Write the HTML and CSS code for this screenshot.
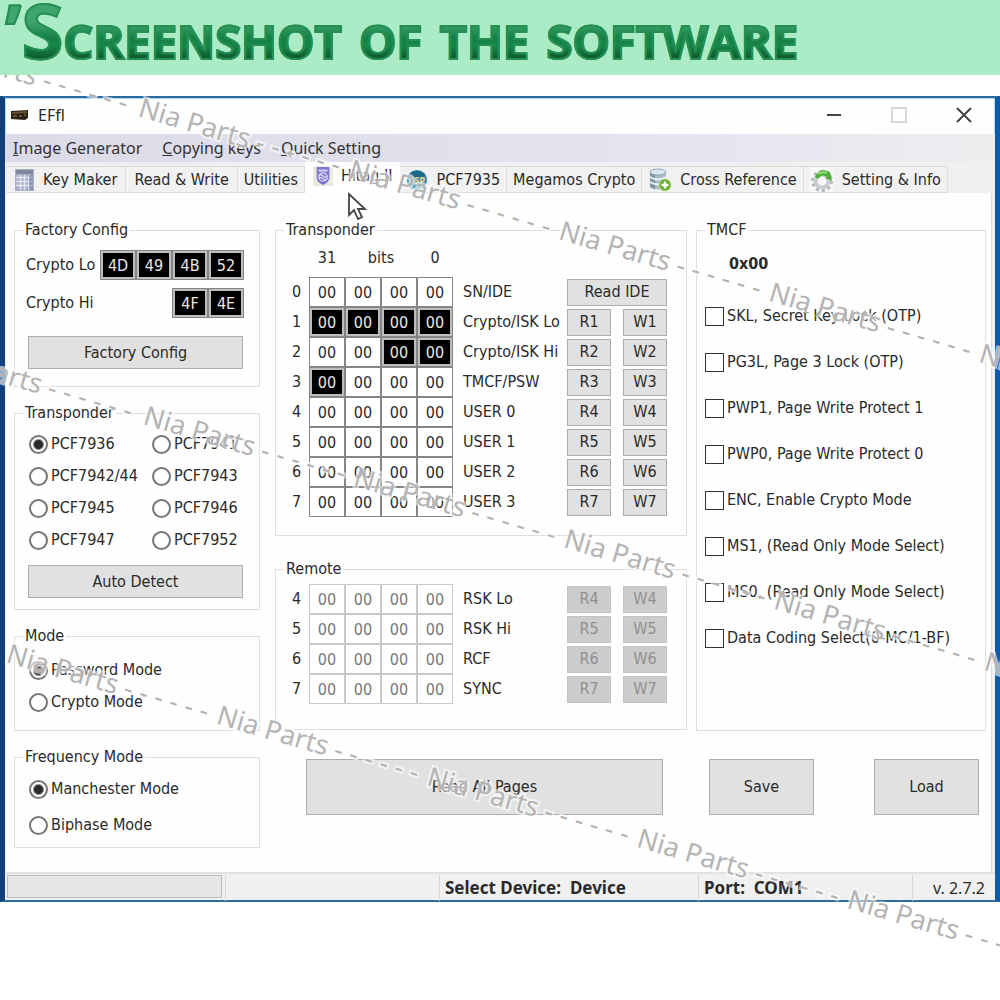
FILE: index.html
```html
<!DOCTYPE html>
<html lang="en">
<head>
    <meta charset="UTF-8">
    <meta name="viewport" content="width=device-width, initial-scale=1.0">
    <title>EFfl</title>
    <link rel="stylesheet" href="styles.css">
</head>
<body>

    <h1 class="banner"><span class="banner-text"><span class="banner-initial">’S</span>creenshot of the software</span></h1>

    <div class="window">
        <div class="titlebar">
            <svg class="app-icon" width="18" height="12" viewBox="0 0 18 12">
                <path d="M0 2 L17 1 V9 L14 11 L0 10 Z" fill="#2b2015"/>
                <path d="M1 3 L16 2 V4 L1 5 Z" fill="#6b5230"/>
                <path d="M2 7h4M8 7h3M13 6h2" stroke="#a58550" stroke-width="1"/>
            </svg>
            <span class="title">EFfl</span>
            <div class="window-buttons">
                <button aria-label="Minimize"><svg width="16" height="16"><path d="M1 8H15" stroke="#444" stroke-width="2"/></svg></button>
                <button aria-label="Maximize" disabled><svg width="16" height="16"><rect x="1" y="1" width="14" height="14" fill="none" stroke="#d8d8d8" stroke-width="2"/></svg></button>
                <button aria-label="Close"><svg width="16" height="16"><path d="M1 1L15 15M15 1L1 15" stroke="#444" stroke-width="2"/></svg></button>
            </div>
        </div>

        <nav class="menu">
            <a href="#"><u>I</u>mage Generator</a>
            <a href="#"><u>C</u>opying keys</a>
            <a href="#"><u>Q</u>uick Setting</a>
        </nav>

        <div class="tabs" role="tablist">
            <button role="tab" class="tab">
                <svg width="20" height="24" viewBox="0 0 20 24">
                    <rect x="0" y="1" width="19" height="22" fill="#a9afc4"/>
                    <rect x="1" y="2" width="17" height="4" fill="#7f879f"/>
                    <path d="M1 9.500H18M1 13.500H18M1 17.500H18M5.500 7V22M9.500 7V22M14 7V22" stroke="#e3e6f2" stroke-width="1.500"/>
                    <path d="M14 7h4v15h-4z" fill="#7078a0" opacity=".5"/>
                </svg>
                Key Maker
            </button>
            <button role="tab" class="tab tab-text">Read &amp; Write</button>
            <button role="tab" class="tab">Utilities</button>
            <button role="tab" class="tab active" aria-selected="true">
                <svg width="20" height="22" viewBox="0 0 22 22">
                    <rect width="22" height="22" fill="#ebe9df"/>
                    <path d="M4 1H18V13Q18 18 11 21Q4 18 4 13Z" fill="#7d76cf"/>
                    <path d="M6 4H16V6H6Z" fill="#dcd9f5"/>
                    <circle cx="11" cy="12" r="4.500" fill="none" stroke="#dcd9f5" stroke-width="1.300"/>
                    <path d="M6 11q2.500-2.500 5 0t5 0M6 14q2.500-2.500 5 0t5 0" fill="none" stroke="#dcd9f5" stroke-width="1.200"/>
                </svg>
                Hitag II
            </button>
            <button role="tab" class="tab">
                <svg width="22" height="24" viewBox="0 0 24 24">
                    <circle cx="12" cy="12" r="11" fill="#2f8ba6"/>
                    <path d="M3 6Q12 -2 21 6L19 9H5Z" fill="#1c6a86"/>
                    <text x="12" y="16" class="chip-text">ESP</text>
                    <path d="M5 19Q12 24 19 19" fill="none" stroke="#7cc3d4" stroke-width="1.500"/>
                </svg>
                PCF7935
            </button>
            <button role="tab" class="tab">Megamos Crypto</button>
            <button role="tab" class="tab">
                <svg width="24" height="24" viewBox="0 0 24 24">
                    <path d="M2 4v15q8 5 16 0V4z" fill="#a9bcc8"/>
                    <path d="M2 4v15q3 2 5 2.300V5z" fill="#7e95a5"/>
                    <ellipse cx="10" cy="4" rx="8" ry="3" fill="#dbe7ee" stroke="#91a5b1"/>
                    <path d="M2 9q8 5 16 0M2 14q8 5 16 0" fill="none" stroke="#edf4f8" stroke-width="2"/>
                    <circle cx="17" cy="17" r="6" fill="#67ad2c" stroke="#b9dc92"/>
                    <path d="M17 13.500V20.500M13.500 17H20.500" stroke="#fff" stroke-width="2.500"/>
                </svg>
                Cross Reference
            </button>
            <button role="tab" class="tab">
                <svg width="24" height="24" viewBox="0 0 24 24">
                    <rect width="24" height="24" fill="#f8f8f8"/>
                    <circle cx="12" cy="13" r="9" fill="none" stroke="#b4b9bc" stroke-width="4" stroke-dasharray="3 2.650"/>
                    <circle cx="12" cy="13" r="6.500" fill="none" stroke="#c9cdd0" stroke-width="4"/>
                    <path d="M5 9Q8 2 14 2L20 4L22 13L15 10L17 9Q12 5 8 11Z" fill="#4caf37"/>
                    <path d="M8 6Q12 3 17 5" fill="none" stroke="#9bdc83" stroke-width="2"/>
                </svg>
                Setting &amp; Info
            </button>
            <svg class="pointer" width="22" height="30" viewBox="0 0 22 30">
                <path d="M2 2V23L7 18L11 27L15 25L11 17H18Z" fill="#fff" stroke="#444" stroke-width="1.800"/>
            </svg>
        </div>

        <div class="panel">
            <div class="column column-left">
                <fieldset class="factory">
                    <legend>Factory Config</legend>
                    <div class="key-row">
                        <span>Crypto Lo</span>
                        <div class="bytes">
                            <input class="byte dark" value="4D" aria-label="Crypto Lo 3"><input class="byte dark" value="49" aria-label="Crypto Lo 2"><input class="byte dark" value="4B" aria-label="Crypto Lo 1"><input class="byte dark" value="52" aria-label="Crypto Lo 0">
                        </div>
                    </div>
                    <div class="key-row">
                        <span>Crypto Hi</span>
                        <div class="bytes">
                            <input class="byte dark" value="4F" aria-label="Crypto Hi 1"><input class="byte dark" value="4E" aria-label="Crypto Hi 0">
                        </div>
                    </div>
                    <button class="btn wide">Factory Config</button>
                </fieldset>

                <fieldset class="chips">
                    <legend>Transponder</legend>
                    <div class="chip-grid">
                        <label class="option"><input type="radio" name="chip" checked>PCF7936</label>
                        <label class="option"><input type="radio" name="chip">PCF7941</label>
                        <label class="option"><input type="radio" name="chip">PCF7942/44</label>
                        <label class="option"><input type="radio" name="chip">PCF7943</label>
                        <label class="option"><input type="radio" name="chip">PCF7945</label>
                        <label class="option"><input type="radio" name="chip">PCF7946</label>
                        <label class="option"><input type="radio" name="chip">PCF7947</label>
                        <label class="option"><input type="radio" name="chip">PCF7952</label>
                    </div>
                    <button class="btn wide">Auto Detect</button>
                </fieldset>

                <fieldset class="mode">
                    <legend>Mode</legend>
                    <label class="option"><input type="radio" name="mode" checked>Password Mode</label>
                    <label class="option"><input type="radio" name="mode">Crypto Mode</label>
                </fieldset>

                <fieldset class="frequency">
                    <legend>Frequency Mode</legend>
                    <label class="option"><input type="radio" name="frequency" checked>Manchester Mode</label>
                    <label class="option"><input type="radio" name="frequency">Biphase Mode</label>
                </fieldset>
            </div>

            <div class="column column-middle">
                <fieldset class="pages">
                    <legend>Transponder</legend>
                    <table>
                        <thead>
                            <tr>
                                <th class="col-index"></th>
                                <th class="col-byte">31</th>
                                <th class="col-bits" colspan="2">bits</th>
                                <th class="col-byte">0</th>
                                <th></th>
                                <th class="col-buttons"></th>
                            </tr>
                        </thead>
                        <tbody id="transponderPages"></tbody>
                    </table>
                </fieldset>

                <fieldset class="remote">
                    <legend>Remote</legend>
                    <table>
                        <tbody id="remotePages"></tbody>
                    </table>
                </fieldset>

                <button class="btn big read-all">Read All Pages</button>
            </div>

            <div class="column column-right">
                <fieldset class="tmcf">
                    <legend>TMCF</legend>
                    <strong class="value">0x00</strong>
                    <label class="option"><input type="checkbox">SKL, Secret Key Lock (OTP)</label>
                    <label class="option"><input type="checkbox">PG3L, Page 3 Lock (OTP)</label>
                    <label class="option"><input type="checkbox">PWP1, Page Write Protect 1</label>
                    <label class="option"><input type="checkbox">PWP0, Page Write Protect 0</label>
                    <label class="option"><input type="checkbox">ENC, Enable Crypto Mode</label>
                    <label class="option"><input type="checkbox">MS1, (Read Only Mode Select)</label>
                    <label class="option"><input type="checkbox">MS0, (Read Only Mode Select)</label>
                    <label class="option"><input type="checkbox">Data Coding Select(0-MC/1-BF)</label>
                </fieldset>
                <div class="file-buttons">
                    <button class="btn big">Save</button>
                    <button class="btn big">Load</button>
                </div>
            </div>
        </div>

        <div class="status">
            <div class="status-progress"><progress value="0" max="100" aria-label="Progress"></progress></div>
            <div class="status-empty"></div>
            <div class="status-device">Select Device:&nbsp; Device</div>
            <div class="status-port">Port:&nbsp; COM1</div>
            <div class="status-version">v. 2.7.2</div>
        </div>
    </div>

    <svg class="watermark" width="1000" height="1000">
        <defs>
            <text id="mark">Nia Parts - - - - - -</text>
        </defs>
        <g transform="translate(137 116) rotate(16.300)">
            <use href="#mark" x="-222"/><use href="#mark"/><use href="#mark" x="219"/><use href="#mark" x="438"/><use href="#mark" x="657"/><use href="#mark" x="876"/>
        </g>
        <g transform="translate(142 424) rotate(16.300)">
            <use href="#mark" x="-222"/><use href="#mark"/><use href="#mark" x="219"/><use href="#mark" x="438"/><use href="#mark" x="657"/><use href="#mark" x="876"/>
        </g>
        <g transform="translate(5 662) rotate(16.300)">
            <use href="#mark"/><use href="#mark" x="219"/><use href="#mark" x="438"/><use href="#mark" x="657"/><use href="#mark" x="876"/>
        </g>
    </svg>

    <script>
        // "dark" lists the byte columns that hold key data
        const transponderPages = [
            { page: 0, name: "SN/IDE", dark: [] },
            { page: 1, name: "Crypto/ISK Lo", dark: [0, 1, 2, 3] },
            { page: 2, name: "Crypto/ISK Hi", dark: [2, 3] },
            { page: 3, name: "TMCF/PSW", dark: [0] },
            { page: 4, name: "USER 0", dark: [] },
            { page: 5, name: "USER 1", dark: [] },
            { page: 6, name: "USER 2", dark: [] },
            { page: 7, name: "USER 3", dark: [] }
        ];

        const remotePages = [
            { page: 4, name: "RSK Lo", dark: [] },
            { page: 5, name: "RSK Hi", dark: [] },
            { page: 6, name: "RCF", dark: [] },
            { page: 7, name: "SYNC", dark: [] }
        ];

        function fillPages(id, pages, disabled) {
            var off = disabled ? " disabled" : "";
            var html = "";
            pages.forEach(function(row) {
                html += '<tr><td class="col-index">' + row.page + '</td>';
                for (var i = 0; i < 4; i++) {
                    html += '<td class="col-byte"><input class="byte' + (row.dark.includes(i) ? " dark" : "") +
                            '" value="00" aria-label="' + row.name + " byte " + (3 - i) + '"' + off + '></td>';
                }
                html += '<td class="col-name">' + row.name + '</td><td class="col-buttons"><div class="page-buttons">';
                if (row.page === 0) {
                    html += '<button class="btn">Read IDE</button>';
                } else {
                    html += '<button class="btn"' + off + '>R' + row.page + '</button>' +
                            '<button class="btn"' + off + '>W' + row.page + '</button>';
                }
                html += '</div></td></tr>';
            });
            document.getElementById(id).innerHTML = html;
        }

        fillPages("transponderPages", transponderPages, false);
        fillPages("remotePages", remotePages, true);
    </script>

</body>
</html>
```

FILE: styles.css
```css
* {
    box-sizing: border-box;
}

body {
    position: relative;
    min-height: 100vh;
    margin: 0;
    background-color: #fff;
    color: #2a2a2a;
    font-family: "DejaVu Sans Condensed", "DejaVu Sans", sans-serif;
    font-size: 16px;
    line-height: 18px;
    overflow-x: hidden;
}

button, input {
    font: inherit;
    color: inherit;
}

.banner {
    position: relative;
    z-index: 2;
    margin: 0 0 21px;
    height: 75px;
    background-color: #abebc6;
    font-family: "Open Sans", sans-serif;
    font-size: 67px;
    font-weight: bold;
    font-variant: small-caps;
    line-height: 60px;
    white-space: nowrap;
}

.banner-text {
    display: inline-block;
    height: 75px;
    padding-left: 5px;
    background: linear-gradient(#3fa56f 22px, #158045 38px, #17864a 46px, #0c5227 60px);
    background-clip: text;
    -webkit-background-clip: text;
    color: transparent;
    -webkit-text-stroke: 2px #258f52;
}

.banner-initial {
    font-size: 76px;
}

/* window frame */
.window {
    border-style: solid;
    border-width: 2px 5px;
    border-color: #2c6aa0 #1259a8 #2c6aa0 #12407a;
    background-color: #f0f0f0;
}

.titlebar {
    display: flex;
    align-items: center;
    height: 36px;
    padding: 0 22px 3px 5px;
    border: 1px solid #a9dcf7;
    border-bottom: none;
    background-color: #fefefe;
}

.title {
    margin-left: 9px;
    font-family: "Noto Sans", sans-serif;
    font-size: 16px;
}

.window-buttons {
    display: flex;
    gap: 49px;
    margin-left: auto;
}

.window-buttons button {
    display: flex;
    padding: 0;
    border: none;
    background: none;
}

.menu {
    display: flex;
    gap: 20px;
    height: 28px;
    padding: 0 8px;
    background: linear-gradient(to right, #dcdbe8, #e4e5f0 70%, #eeeef0);
    font-family: "Noto Sans", sans-serif;
    font-size: 16px;
    line-height: 28px;
}

.menu a {
    color: #333;
    text-decoration: none;
}

.tabs {
    position: relative;
    display: flex;
    align-items: flex-end;
    height: 31px;
    padding: 0 2px;
}

.tab {
    display: flex;
    align-items: center;
    gap: 8px;
    height: 27px;
    padding: 0 6px;
    border: 1px solid #dcdcdc;
    border-left: none;
    background-color: #f1f1f1;
    white-space: nowrap;
}

.tab:first-child, .tab-text {
    padding: 0 8px;
}

.tab.active {
    height: 31px;
    padding: 0 8px 3px;
    border: none;
    background-color: #fff;
}

.chip-text {
    font-size: 9px;
    font-weight: bold;
    text-anchor: middle;
    fill: #e5d38c;
}

.pointer {
    position: absolute;
    left: 342px;
    top: 30px;
}

/* main panel */
.panel {
    display: grid;
    grid-template-columns: 252fr 412fr 290fr;
    column-gap: 9px;
    margin: 0 3px 0 1px;
    padding: 28px 5px 24px 8px;
    background-color: #fefefe;
    border-right: 1px solid #dcdcdc;
}

.column {
    display: flex;
    flex-direction: column;
    min-width: 0;
}

.column-left {
    gap: 17px;
    padding-right: 6px;
}

.column-middle {
    gap: 24px;
}

fieldset {
    min-width: 0;
    margin: 0;
    padding: 0 0 0 8px;
    border: 1px solid #dedede;
}

legend {
    padding: 0 2px;
    line-height: 18px;
}

.btn {
    padding: 0;
    border: 1px solid #adadad;
    background-color: #e1e1e1;
}

.btn:disabled {
    border-color: #c4c4c4;
    background-color: #cccccc;
    color: #909090;
}

.btn.wide {
    display: block;
    width: 215px;
    max-width: 100%;
    height: 33px;
    margin-left: 5px;
}

.btn.big {
    height: 56px;
}

.byte {
    display: block;
    width: 36px;
    height: 30px;
    padding: 0;
    border: 1px solid #858585;
    border-radius: 0;
    background-color: #fff;
    text-align: center;
}

.byte.dark {
    background-color: #000;
    color: #e8e8e8;
    box-shadow: inset 0 0 0 2px #bdbdbd;
}

.byte:disabled {
    border-color: #c8c8c8;
    color: #777;
}

.option {
    display: flex;
    align-items: center;
    gap: 3px;
    height: 32px;
    white-space: nowrap;
}

.option input {
    appearance: none;
    flex: none;
    width: 19px;
    height: 19px;
    margin: 0;
    border: 1px solid #333;
    background-color: #fff;
}

.option input[type="radio"] {
    border: 2px solid #777;
    border-radius: 50%;
}

.option input[type="radio"]:checked {
    background: radial-gradient(circle, #2a2a2a 4px, #fff 6px);
}

.factory {
    padding: 11px 15px 17px 8px;
}

.key-row {
    display: flex;
    align-items: center;
    justify-content: space-between;
    margin: 0 0 8px 3px;
}

.bytes {
    display: flex;
}

.factory .btn {
    margin-top: 18px;
}

.chips {
    padding: 6px 11px 11px 8px;
}

.chip-grid {
    display: grid;
    grid-template-columns: 123px 1fr;
    margin: 0 0 9px 6px;
}

.mode {
    padding: 9px 0 12px 8px;
}

.frequency {
    padding: 7px 0 6px 8px;
}

.mode .option, .frequency .option {
    margin-left: 6px;
}

.frequency .option + .option {
    margin-top: 4px;
}

/* page tables */
table {
    width: 100%;
    border-collapse: collapse;
}

th {
    height: 38px;
    font-weight: normal;
}

th, td {
    padding: 0;
}

td {
    height: 30px;
}

.col-index {
    width: 25px;
    text-align: center;
}

.col-byte {
    width: 36px;
}

.col-bits {
    width: 72px;
}

.col-name {
    padding-left: 10px;
    white-space: nowrap;
}

.col-buttons {
    width: 100px;
}

.pages {
    padding: 0 19px 18px 8px;
}

.remote {
    padding: 6px 19px 25px 8px;
}

.page-buttons {
    display: flex;
    gap: 12px;
}

.page-buttons .btn {
    flex: 1;
    height: 27px;
}

.read-all {
    margin: 5px 24px 0 31px;
}

.tmcf {
    padding: 10px 0 69px 8px;
}

.tmcf .value {
    display: block;
    margin-left: 24px;
    line-height: 30px;
}

.tmcf .option {
    height: 46px;
}

.tmcf .value + .option {
    margin-top: 14px;
}

.file-buttons {
    display: flex;
    justify-content: space-between;
    margin: 28px 7px 0 13px;
}

.file-buttons .btn {
    width: 105px;
}

/* status bar */
.status {
    display: grid;
    grid-template-columns: 221fr 214fr 259fr 214fr 82fr;
    height: 28px;
    padding: 1px 0 1px 0;
    border-top: 2px solid #e2e2e2;
    font-family: "Noto Sans", sans-serif;
    font-size: 16px;
    line-height: 26px;
}

.status > div {
    min-width: 0;
    border-right: 1px solid #d8d8d8;
    padding-left: 5px;
    white-space: nowrap;
}

.status > div:last-child {
    border-right: none;
}

.status .status-progress {
    padding: 0 3px 0 2px;
}

.status progress {
    appearance: none;
    display: block;
    width: 100%;
    height: 23px;
    border: 1px solid #bcbcbc;
    background-color: #e6e6e6;
}

.status progress::-webkit-progress-bar {
    background-color: #e6e6e6;
}

.status-device, .status-port {
    font-size: 17px;
    font-weight: bold;
}

.status .status-version {
    padding-right: 10px;
    text-align: right;
}

.watermark {
    position: absolute;
    left: 0;
    top: 0;
    pointer-events: none;
    font-family: "Noto Sans", sans-serif;
    font-size: 27px;
    fill: #b4b4b4;
    stroke: rgba(255, 255, 255, 0.6);
    stroke-width: 4px;
    paint-order: stroke;
}
```
